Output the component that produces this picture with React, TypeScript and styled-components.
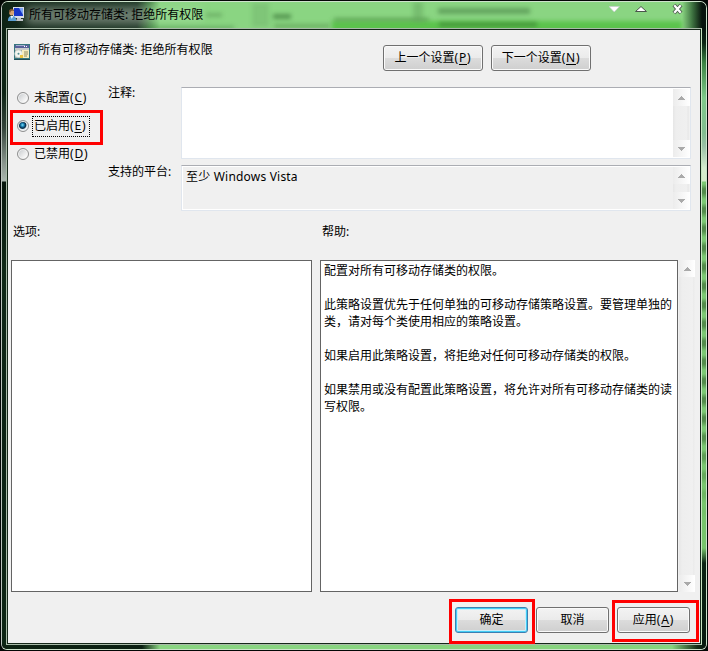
import React from 'react';
import styled, { createGlobalStyle, css } from 'styled-components';

const GlobalStyle = createGlobalStyle`
  *, *::after { box-sizing: border-box; }
  body {
    margin: 0;
    overflow: hidden;
    background: #05080a;
    color: #000;
    font: 12px/17px 'Noto Sans', 'Noto Sans CJK SC', sans-serif;
  }
`;

const Frame = styled.div`
  width: 708px;
  height: 651px;
  padding: 1px;
  background: #030705;
`;

const Glass = styled.div`
  position: relative;
  height: 649px;
  border: 1px solid #cde3cc;
  border-left-color: #b9c2bc;
  border-radius: 7px 7px 6px 6px;
  overflow: hidden;
  display: grid;
  grid-template-columns: 4px 696px 4px;
  grid-template-rows: 26px 617px 4px;
`;

const TitleBar = styled.header`
  grid-column: 1 / -1;
  position: relative;
  display: flex;
  align-items: flex-start;
  padding: 4px 0 0 6px;
  overflow: hidden;
  background: linear-gradient(90deg, #0c2213 0, #14291b 20px, #1c3423 135px, #488548 148px, #8ad582 158px, #8ad582 680px, #3a6d3d 691px, #07140d 700px);
`;

const Blur = styled.span<{ $x: number; $y: number; $w: number; $h: number; $color: string; $soft?: number }>`
  position: absolute;
  left: ${p => p.$x}px;
  top: ${p => p.$y}px;
  width: ${p => p.$w}px;
  height: ${p => p.$h}px;
  background: ${p => p.$color};
  filter: blur(${p => p.$soft ?? 2}px);
`;

const TitleText = styled.h1`
  position: relative;
  margin: 0 0 0 5px;
  font-size: 12px;
  font-weight: 400;
  line-height: 17px;
  white-space: nowrap;
`;

const TitleIcon = styled.svg`
  position: relative;
  flex: none;
  margin-top: 1px;
`;

const CaptionButtons = styled.svg`
  position: absolute;
  right: 17px;
  top: 0;
`;

const LeftEdge = styled.div`
  background: linear-gradient(#0d2214 0, #0d2414 65px, #33443a 100px, #88948c 135px, #a9b6ae 153px, #07170d 154px, #102817 240px, #0b2114 420px, #0d2514 100%);
`;

const RightEdge = styled.div`
  background:
    linear-gradient(#07140d 0, #0b2413 15px, #3c8344 35px, #7fc98a 70px, #83bc90 105px, #9abfa5 118px, #d5eccf 140px, #d5ebc9 153px, transparent 154px, transparent 520px, #0b2413 535px, #07180e 100%),
    linear-gradient(transparent 400px, #77c46b 490px),
    repeating-linear-gradient(#7cc873 0 4px, #538b4b 9px 13px, #7cc873 19px);
`;

const BottomEdge = styled.div`
  grid-column: 1 / -1;
  background: linear-gradient(90deg, #0d2212 0, #0b2012 140px, #8ad582 158px, #86d37d 670px, #152c18 695px, #07140d 100%);
`;

const ClientBorder = styled.div`
  border: 1px solid #a9bba9;
  border-right-color: #c6e5c1;
  padding: 1px;
  background: #152719;
`;

const Client = styled.main`
  width: 692px;
  height: 613px;
  background: #f0f0f0;
  display: grid;
  grid-template-rows: 57px 124px 49px 332px 51px;
`;

const PolicyHeader = styled.section`
  display: flex;
  align-items: flex-start;
  padding: 14px 0 0 6px;
`;

const PolicyName = styled.div`
  width: 345px;
  margin: -3px 0 0 8px;
  letter-spacing: 0.02px;
`;

const ButtonRow = styled.div`
  display: flex;
  gap: 8px;
  margin-top: 1px;
`;

const Button = styled.button<{ $width: number; $primary?: boolean }>`
  width: ${p => p.$width}px;
  height: 26px;
  padding: 0 0 1px;
  border: 1px solid #707070;
  border-radius: 3px;
  background: linear-gradient(#f3f3f3 0, #ebebeb 48%, #dcdcdc 50%, #cfcfcf 100%);
  box-shadow: inset 0 0 0 1px #fafafa;
  color: #000;
  font: inherit;
  white-space: nowrap;
  ${p => p.$primary && css`
    border-color: #3c7fb1;
    box-shadow: inset 0 0 0 1px #42cdf5, inset 0 0 0 2px #c9eefa;
  `}
`;

const Mnemonic = styled.span`
  letter-spacing: 0.8px;
`;

const Key = styled.span`
  text-decoration: underline;
  text-underline-offset: 2px;
`;

const Settings = styled.section`
  display: grid;
  grid-template-columns: 100px 73px 510px;
`;

const Radios = styled.div`
  display: flex;
  flex-direction: column;
  padding: 1px 0 0 9px;
`;

const RadioLabel = styled.label<{ $marked?: boolean }>`
  position: relative;
  height: 28px;
  display: flex;
  align-items: center;
  gap: 3px;
  padding-bottom: 8px;
  ${p => p.$marked && css`
    &::after {
      content: '';
      position: absolute;
      left: -7px;
      top: -6px;
      width: 93px;
      height: 35px;
      border: 3px solid #f00;
    }
  `}
`;

const RadioDot = styled.span<{ $checked?: boolean }>`
  width: 12px;
  height: 12px;
  border: 1px solid #8e8f8f;
  border-radius: 50%;
  background: ${p => p.$checked
    ? 'radial-gradient(circle at 45% 40%, #7fe0f8 0, #1c85b8 1.6px, #0a3350 3px, #163d58 3.5px, #e3e9ee 4.4px)'
    : 'linear-gradient(135deg, #c3c7ca, #f7f7f7 75%)'};
  box-shadow: inset 0 0 0 1px #f4f4f4;
`;

const RadioText = styled.span<{ $focused?: boolean }>`
  height: 21px;
  padding: 1px 4px 0 2px;
  outline: ${p => (p.$focused ? '1px dotted #000' : 'none')};
  outline-offset: -1px;
  line-height: 18px;
  white-space: nowrap;
`;

const FieldLabels = styled.div`
  display: flex;
  flex-direction: column;
  gap: 62px;
  margin-top: -3px;
  white-space: nowrap;
`;

const Fields = styled.div`
  display: flex;
  flex-direction: column;
  gap: 6px;
`;

const Field = styled.div<{ $height: number; $fill: string }>`
  display: flex;
  justify-content: space-between;
  height: ${p => p.$height}px;
  padding: 1px 0 1px 1px;
  border: 1px solid #e0e6ee;
  border-top-color: #abadb3;
  background: ${p => p.$fill};
  box-shadow: inset 0 0 0 1px #fff;
`;

const FieldText = styled.span`
  padding: 1px 0 0 3px;
  letter-spacing: 0.2px;
`;

const Track = styled.div<{ $width: number }>`
  width: ${p => p.$width}px;
  height: 100%;
  display: flex;
  flex-direction: column;
  justify-content: space-between;
  background: linear-gradient(90deg, #e6e6e6, #eeeeee 3px, #f0f0f0 14px, #e7e7e7 15px, #f4f4f4);
`;

const ArrowBox = styled.span`
  height: 17px;
  display: flex;
  align-items: center;
  justify-content: center;
  background: linear-gradient(90deg, #ececec, #fff);
`;

const Headings = styled.section`
  display: grid;
  grid-template-columns: 309px 1fr;
  padding: 12px 0 0 5px;
`;

const Panes = styled.section`
  display: grid;
  grid-template-columns: 301px 358px 16px;
  column-gap: 8px;
  padding-left: 3px;
`;

const Pane = styled.div`
  border: 1px solid #646464;
  background: #fff;
  padding: 1px 0 0 3px;
  white-space: nowrap;
`;

const PaneScroll = styled.div`
  margin-left: -7px;
`;

const Paragraph = styled.p`
  margin: 0 0 17px;
`;

const Footer = styled.footer`
  display: flex;
  justify-content: flex-end;
  gap: 8px;
  padding: 15px 12px 0 0;
`;

const Highlight = styled.div<{ $edges: string }>`
  position: relative;
  height: 26px;
  &::after {
    content: '';
    position: absolute;
    inset: ${p => p.$edges};
    border: 3px solid #f00;
    pointer-events: none;
  }
`;

const Arrow = ({ down = false }: { down?: boolean }) => (
  <svg width="7" height="4" viewBox="0 0 7 4" shapeRendering="crispEdges">
    <path d={down ? 'M0 0h7L3.5 4z' : 'M0 4h7L3.5 0z'} fill="#aaa" />
  </svg>
);

const Scrollbar = ({ width = 17 }: { width?: number }) => (
  <Track $width={width}>
    <ArrowBox><Arrow /></ArrowBox>
    <ArrowBox><Arrow down /></ArrowBox>
  </Track>
);

const Access = ({ letter }: { letter: string }) => (
  <Mnemonic>(<Key>{letter}</Key>)</Mnemonic>
);

const UserMonitorIcon = () => (
  <TitleIcon width="16" height="16" viewBox="0 0 16 16">
    <path d="M5 0h11v11H5z" fill="#d9dde6" />
    <path d="M6 1h9v8H6z" fill="#1736c8" />
    <path d="M11 1h4v7z" fill="#7da5f4" />
    <path d="M9 11h4v1h2v2H8z" fill="#bfc4ca" />
    <ellipse cx="3.6" cy="5.6" rx="2.4" ry="3" fill="#d8a36f" />
    <path d="M1 5c0-4 5-4 5-1-2-1-3-1-4 2z" fill="#75502d" />
    <path d="M0 13c0-5 7-6 8-1v2H0z" fill="#5b9fd4" />
    <path d="M2.5 9l1.2 3 1.8-3z" fill="#eef7fc" />
  </TitleIcon>
);

const PolicyIcon = () => (
  <svg width="16" height="16" viewBox="0 0 16 16">
    <path d="M0 0h16v15H0z" fill="#37777e" />
    <path d="M1 1h14v3H1z" fill="#5a619c" />
    <path d="M2 1h9v1H2z" fill="#a5aed0" />
    <path d="M10 2h1v1h-1zM12 2h1v1h-1z" fill="#fff" />
    <path d="M1 4h14v2H1z" fill="#c9cccb" />
    <path d="M1 6h14v8H1z" fill="#a3aba4" />
    <circle cx="4.5" cy="9.8" r="3.8" fill="#f4f6ef" stroke="#c5ceca" strokeWidth=".6" />
    <circle cx="4.5" cy="9.8" r="1" fill="#548d91" />
    <path d="M8 6h7v8H8z" fill="#f7edc0" />
    <path d="M10 8h4M10 10h4M10 12h3" stroke="#928b60" />
    <path d="M6 11h3v3H6z" fill="#ecc340" />
    <path d="M0 15h16v1H0z" fill="#224e58" />
  </svg>
);

const WindowControls = () => (
  <CaptionButtons width="80" height="20" viewBox="0 0 80 20">
    <path d="M0 4.5h10.5l-5.25 5.5z" fill="#fff" stroke="#c5c9cd" strokeWidth=".6" />
    <path d="M26.5 9.5h11l-5.5-5z" fill="#fff" stroke="#4a554b" />
    <path d="M65 3l7 8M72 3l-7 8" stroke="#4c574f" strokeWidth="4" />
    <path d="M65.3 3.3l6.4 7.4M71.7 3.3l-6.4 7.4" stroke="#fff" strokeWidth="2.2" />
  </CaptionButtons>
);

const helpText = [
  ['配置对所有可移动存储类的权限。'],
  ['此策略设置优先于任何单独的可移动存储策略设置。要管理单独的', '类，请对每个类使用相应的策略设置。'],
  ['如果启用此策略设置，将拒绝对任何可移动存储类的权限。'],
  ['如果禁用或没有配置此策略设置，将允许对所有可移动存储类的读', '写权限。'],
];

const states = [
  { text: '未配置', key: 'C' },
  { text: '已启用', key: 'E', on: true },
  { text: '已禁用', key: 'D' },
];

export default function App() {
  return (
    <>
      <GlobalStyle />
      <Frame>
        <Glass>
          <TitleBar>
            <Blur $x={24} $y={5} $w={124} $h={17} $color="#8b9a8dbb" $soft={5} />
            <Blur $x={145} $y={4} $w={55} $h={17} $color="#9fdb9999" $soft={4} />
            <Blur $x={204} $y={11} $w={16} $h={4} $color="#58945288" />
            <Blur $x={148} $y={24} $w={84} $h={3} $color="#4d914d99" />
            <Blur $x={250} $y={1} $w={17} $h={24} $color="#6eaf6866" />
            <Blur $x={271} $y={12} $w={18} $h={5} $color="#3d793baa" />
            <Blur $x={272} $y={22} $w={56} $h={4} $color="#5292488a" />
            <Blur $x={330} $y={19} $w={350} $h={12} $color="#5bc34c" />
            <Blur $x={332} $y={16} $w={95} $h={3} $color="#47883fa0" />
            <Blur $x={411} $y={0} $w={10} $h={20} $color="#62a45d77" />
            <Blur $x={436} $y={6} $w={92} $h={6} $color="#427b4088" />
            <Blur $x={437} $y={20} $w={98} $h={5} $color="#397e3199" />
            <UserMonitorIcon />
            <TitleText>所有可移动存储类: 拒绝所有权限</TitleText>
            <WindowControls />
          </TitleBar>
          <LeftEdge />
          <ClientBorder>
            <Client>
              <PolicyHeader>
                <PolicyIcon />
                <PolicyName>所有可移动存储类: 拒绝所有权限</PolicyName>
                <ButtonRow>
                  <Button $width={100}>上一个设置<Access letter="P" /></Button>
                  <Button $width={100}>下一个设置<Access letter="N" /></Button>
                </ButtonRow>
              </PolicyHeader>
              <Settings>
                <Radios>
                  {states.map(s => (
                    <RadioLabel key={s.key} $marked={s.on}>
                      <RadioDot $checked={s.on} />
                      <RadioText $focused={s.on}>{s.text}<Access letter={s.key} /></RadioText>
                    </RadioLabel>
                  ))}
                </Radios>
                <FieldLabels>
                  <span>注释:</span>
                  <span>支持的平台:</span>
                </FieldLabels>
                <Fields>
                  <Field $height={72} $fill="#fff"><span /><Scrollbar /></Field>
                  <Field $height={46} $fill="#f0f0f0"><FieldText>至少 Windows Vista</FieldText><Scrollbar /></Field>
                </Fields>
              </Settings>
              <Headings>
                <span>选项:</span>
                <span>帮助:</span>
              </Headings>
              <Panes>
                <Pane />
                <Pane>
                  {helpText.map(lines => (
                    <Paragraph key={lines[0]}>
                      {lines.map((line, i) => <React.Fragment key={line}>{i > 0 && <br />}{line}</React.Fragment>)}
                    </Paragraph>
                  ))}
                </Pane>
                <PaneScroll><Scrollbar width={16} /></PaneScroll>
              </Panes>
              <Footer>
                <Highlight $edges="-8px -7px -11px -6px"><Button $width={73} $primary>确定</Button></Highlight>
                <Button $width={73}>取消</Button>
                <Highlight $edges="-7px -9px -9px -5px"><Button $width={73}>应用<Access letter="A" /></Button></Highlight>
              </Footer>
            </Client>
          </ClientBorder>
          <RightEdge />
          <BottomEdge />
        </Glass>
      </Frame>
    </>
  );
}
